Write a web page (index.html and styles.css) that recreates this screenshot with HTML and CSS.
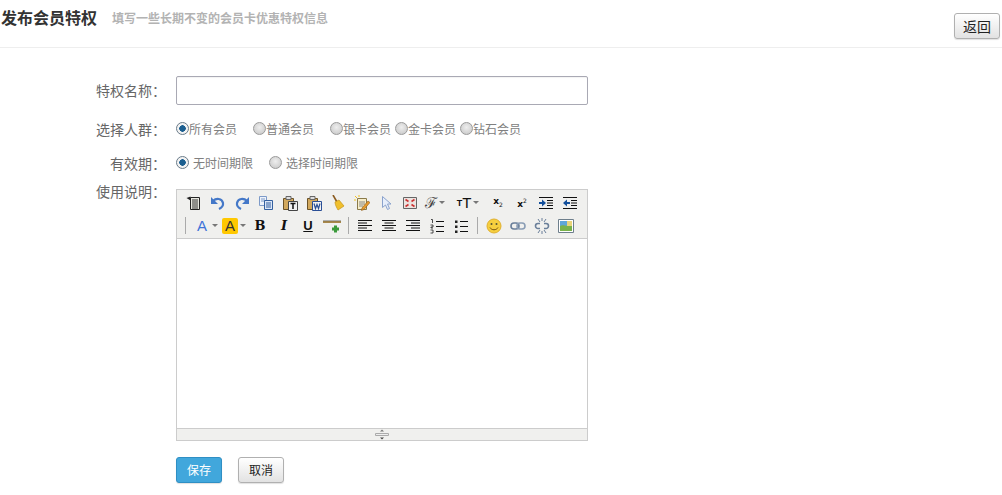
FILE: index.html
```html
<!DOCTYPE html>
<html lang="zh-CN">
<head>
    <meta charset="UTF-8">
    <title>发布会员特权</title>
    <link rel="stylesheet" href="styles.css">
</head>
<body>
    <div class="page-head">
        <h2>发布会员特权</h2>
        <span class="sub">填写一些长期不变的会员卡优惠特权信息</span>
        <button class="btn btn-back">返回</button>
    </div>

    <form class="form">
        <div class="row row-name">
            <label class="lab">特权名称<span class="colon">：</span></label>
            <input type="text" class="text-input">
        </div>
        <div class="row row-group">
            <label class="lab">选择人群<span class="colon">：</span></label>
            <div class="radios">
                <label class="opt w77"><input type="radio" name="g" checked>所有会员</label>
                <label class="opt w77"><input type="radio" name="g">普通会员</label>
                <label class="opt w65"><input type="radio" name="g">银卡会员</label>
                <label class="opt w65"><input type="radio" name="g">金卡会员</label>
                <label class="opt"><input type="radio" name="g">钻石会员</label>
            </div>
        </div>
        <div class="row row-time">
            <label class="lab">有效期<span class="colon">：</span></label>
            <div class="radios">
                <label class="opt opt-gap w93"><input type="radio" name="t" checked>无时间期限</label>
                <label class="opt opt-gap"><input type="radio" name="t">选择时间期限</label>
            </div>
        </div>
        <div class="row row-editor">
            <label class="lab">使用说明<span class="colon">：</span></label>
            <div class="editor">
                <div class="toolbar">
                    <div class="tool-row">
                        <span class="tool"><svg viewBox="0 0 16 16"><path d="M4.500 2.500h9v12h-9z" fill="#e8e8e0" stroke="#222"/><path d="M6 5h6M6 7h6M6 9h6M6 11h6M6 13h6" stroke="#333"/><path d="M.5 3l4-1.500v4z" fill="#222"/></svg></span>
                        <span class="tool"><svg viewBox="0 0 16 16"><path d="M3 6c3-3 9-3 10 2 .5 3-2 5-4 6" fill="none" stroke="#4478c8" stroke-width="2.200"/><path d="M1 2v7h7z" fill="#4478c8"/></svg></span>
                        <span class="tool"><svg viewBox="0 0 16 16"><path d="M13 6c-3-3-9-3-10 2-.5 3 2 5 4 6" fill="none" stroke="#4478c8" stroke-width="2.200"/><path d="M15 2v7H8z" fill="#4478c8"/></svg></span>
                        <span class="tool"><svg viewBox="0 0 16 16"><path d="M1.500 1.500h7v9h-7z" fill="#eef3fb" stroke="#7d9ac8"/><path d="M3 4h4M3 6h4" stroke="#7d9ac8"/><path d="M6.500 5.500h8v9h-8z" fill="#dbe6f7" stroke="#34609f"/><path d="M8 8h5M8 10h5M8 12h5" stroke="#34609f"/></svg></span>
                        <span class="tool"><svg viewBox="0 0 16 16"><path d="M1.500 3.500h10v11h-10z" fill="#d2a85c" stroke="#6b5226"/><path d="M4 1.500h5v3H4z" fill="#ddd" stroke="#666"/><path d="M6.500 6.500h9v9h-9z" fill="#f2f2f2" stroke="#444"/><path d="M8.500 8.500h5M11 8.500v5.500" stroke="#111" stroke-width="1.500"/></svg></span>
                        <span class="tool"><svg viewBox="0 0 16 16"><path d="M1.500 3.500h10v11h-10z" fill="#d2a85c" stroke="#6b5226"/><path d="M4 1.500h5v3H4z" fill="#ddd" stroke="#666"/><path d="M6.500 6.500h9v9h-9z" fill="#f2f2f2" stroke="#2a4f96"/><path d="M8 8.500l1.500 5 1.500-4 1.500 4 1.500-5" fill="none" stroke="#2a4f96" stroke-width="1.200"/></svg></span>
                        <span class="tool"><svg viewBox="0 0 16 16"><path d="M3 0l4 7" stroke="#8a5a1e" stroke-width="1.600"/><path d="M5 7l4-2 5 6-6 4c-1-2-3-5-3-8z" fill="#f0bf2c" stroke="#c4941a" stroke-width=".7"/></svg></span>
                        <span class="tool"><svg viewBox="0 0 16 16"><path d="M3.500 3.500h9v11h-9z" fill="#f6edc9" stroke="#8a7a4a"/><path d="M5 7h6M5 9h6M5 11h4" stroke="#888"/><path d="M1 1l2 2M5 0v2M0 5h2" stroke="#f0c020"/><path d="M8 13l6-7 2 1.500-6 7-2.500 1z" fill="#e79a2a" stroke="#8a5a1e" stroke-width=".6"/></svg></span>
                        <span class="tool"><svg viewBox="0 0 16 16"><path d="M4.500 1.500v11l3-2.500 2 4.500 2-1-2-4.500h3.500z" fill="#e6eefb" stroke="#8aa2cc"/></svg></span>
                        <span class="tool"><svg viewBox="0 0 16 16"><path d="M1.500 2.500h13v11h-13z" fill="#ece4e0" stroke="#666"/><path d="M3.500 4.500l3 2M12.500 4.500l-3 2M3.500 11.500l3-2M12.500 11.500l-3-2" stroke="#c33" stroke-width="1.600"/></svg></span>
                        <span class="tool tool-wide"><span class="g g-font">ℱ</span><i class="caret"></i></span>
                        <span class="tool tool-size"><span class="g g-small">T</span><span class="g g-big">T</span><i class="caret"></i></span>
                        <span class="tool"><span class="g g-script">x<sub>2</sub></span></span>
                        <span class="tool"><span class="g g-script">x<sup>2</sup></span></span>
                        <span class="tool"><svg viewBox="0 0 16 16"><path d="M1 2.500h14M9 5.500h6M9 8h6M9 10.500h6M1 13.500h14" stroke="#111"/><path d="M1 8h4" stroke="#14509c" stroke-width="2"/><path d="M4 4.500l4 3.500-4 3.500z" fill="#14509c"/></svg></span>
                        <span class="tool"><svg viewBox="0 0 16 16"><path d="M1 2.500h14M9 5.500h6M9 8h6M9 10.500h6M1 13.500h14" stroke="#111"/><path d="M4 8h4" stroke="#14509c" stroke-width="2"/><path d="M5 4.500L1 8l4 3.500z" fill="#14509c"/></svg></span>
                    </div>
                    <div class="tool-row">
                        <i class="sep sep-first"></i>
                        <span class="tool tool-color"><span class="g g-color">A</span><i class="caret"></i></span>
                        <span class="tool tool-color"><span class="g g-color g-bg">A</span><i class="caret"></i></span>
                        <span class="tool"><span class="g g-bold">B</span></span>
                        <span class="tool"><span class="g g-italic">I</span></span>
                        <span class="tool"><span class="g g-under">U</span></span>
                        <span class="tool"><svg class="svg-wide" viewBox="0 0 20 16"><path d="M1 3h18v2H1z" fill="#a8884a"/><path d="M1 2.800h18" stroke="#555" stroke-width=".6"/><path d="M10 11h7M13.500 7.500v7" stroke="#3a9a3a" stroke-width="3"/></svg></span>
                        <i class="sep"></i>
                        <span class="tool"><svg viewBox="0 0 16 16"><path d="M1 2.500h14M1 5h9M1 7.500h14M1 10h9M1 12.500h14" stroke="#111"/></svg></span>
                        <span class="tool"><svg viewBox="0 0 16 16"><path d="M1 2.500h14M3.500 5h9M1 7.500h14M3.500 10h9M1 12.500h14" stroke="#111"/></svg></span>
                        <span class="tool"><svg viewBox="0 0 16 16"><path d="M1 2.500h14M6 5h9M1 7.500h14M6 10h9M1 12.500h14" stroke="#111"/></svg></span>
                        <span class="tool"><svg viewBox="0 0 16 16"><path d="M7 3.500h8M7 8.500h8M7 13.500h8" stroke="#111"/><path d="M2 1.500h1.500v3.500M1.500 7h2.500v2H2v1h2M1.500 12H4v3H1.500" fill="none" stroke="#222" stroke-width=".8"/></svg></span>
                        <span class="tool"><svg viewBox="0 0 16 16"><path d="M7 3.500h8M7 8.500h8M7 13.500h8" stroke="#111"/><path d="M2 2.500h2.500v2.500H2zM2 7.500h2.500V10H2zM2 12.500h2.500V15H2z" fill="#222"/></svg></span>
                        <i class="sep"></i>
                        <span class="tool"><svg viewBox="0 0 16 16"><circle cx="8" cy="8" r="7" fill="#f6cf3e" stroke="#e0b030"/><circle cx="5.500" cy="6" r="1" fill="#553"/><circle cx="10.500" cy="6" r="1" fill="#553"/><path d="M4 9.500c1.500 3 6.500 3 8 0" fill="none" stroke="#7a5510"/></svg></span>
                        <span class="tool"><svg viewBox="0 0 16 16"><rect x="1" y="5" width="8" height="6" rx="3" fill="none" stroke="#6a7f9a" stroke-width="1.600"/><rect x="7" y="5" width="8" height="6" rx="3" fill="none" stroke="#8a9db5" stroke-width="1.600"/></svg></span>
                        <span class="tool"><svg viewBox="0 0 16 16"><path d="M6 5.500H4a2.500 2.500 0 000 5h2M10 5.500h2a2.500 2.500 0 010 5h-2" fill="none" stroke="#6a7f9a" stroke-width="1.600"/><path d="M4 1l2 3M8 0v3M12 1l-2 3M4 15l2-3M8 16v-3M12 15l-2-3" stroke="#6a7f9a"/></svg></span>
                        <span class="tool"><svg viewBox="0 0 16 16"><path d="M.5 1.500h15v13H.5z" fill="#fff" stroke="#6e7f8c"/><path d="M2 3h12v6H2z" fill="#5fa6d8"/><path d="M2 13V8c3-2 6 1 12-1v6z" fill="#79b24a"/><path d="M9 3h5v5H9z" fill="#e9d47a"/></svg></span>
                    </div>
                </div>
                <div class="edit-area"></div>
                <div class="resize-bar">
                    <svg viewBox="0 0 16 11" width="16" height="11"><path d="M8 .5l2 2H6z" fill="#777"/><path d="M1.500 4.500h13v2h-13z" fill="#eee" stroke="#aaa"/><path d="M6 8.500h4l-2 2z" fill="#444"/></svg>
                </div>
            </div>
        </div>
        <div class="actions">
            <button type="button" class="btn btn-primary">保存</button>
            <button type="button" class="btn btn-cancel">取消</button>
        </div>
    </form>
</body>
</html>
```

FILE: styles.css
```css
body { margin: 0; font-family: "Liberation Sans", "Noto Sans CJK SC", sans-serif; font-size: 12px; color: #666; background: #fff; height: 495px; overflow: hidden; }

.page-head { height: 47px; border-bottom: 1px solid #eee; display: flex; align-items: flex-start; }
.page-head h2 { margin: 7px 0 0 1px; font-size: 16px; line-height: 24px; color: #333; font-weight: bold; }
.sub { margin: 9px 0 0 15px; font-size: 12px; line-height: 20px; font-weight: bold; color: #b3b3b3; }

.btn { width: 46px; height: 26px; padding: 0 0 1px; border: 1px solid #b0b0b0; border-radius: 3px; background: linear-gradient(#fff, #e2e2e2); font-family: inherit; font-size: 14px; color: #222; box-shadow: 0 1px 1px rgba(0,0,0,.12); }
.btn-back { margin: 13px 2px 0 auto; }
.btn-primary { background: #41a7dc; border-color: #2f8fc4; color: #fff; font-size: 12px; }
.btn-cancel { font-size: 12px; }

.form { padding-top: 28px; }
.row { display: flex; }
.lab { width: 166px; padding-right: 10px; text-align: right; font-size: 14px; line-height: 18px; color: #666; flex: none; }
.colon { font-family: "Noto Sans CJK TC", sans-serif; }
.row-name { height: 29px; align-items: center; }
.row-group { height: 20px; align-items: center; margin-top: 14px; }
.row-time { height: 20px; align-items: center; margin-top: 14px; }
.row-editor { margin-top: 16px; }
.row-editor .lab { margin-top: -7px; }

.text-input { width: 412px; height: 29px; box-sizing: border-box; border: 1px solid #a9a9b4; border-radius: 2px; margin: 0; padding: 0 6px; box-shadow: inset 0 1px 1px rgba(0,0,0,.05); }

.radios { display: flex; align-items: center; position: relative; top: -1px; }
.opt { display: flex; align-items: center; color: #808080; font-size: 12px; }
.opt input { appearance: none; width: 13px; height: 13px; margin: 0; box-sizing: border-box; border-radius: 50%; border: 1px solid #9a9a9a; background: radial-gradient(circle at 50% 40%, #eee, #c4c4c4); flex: none; }
.opt input:checked { background: radial-gradient(circle, #1c5f90 0, #1c5f90 3px, #f3f3f3 3.500px); border-color: #6a7c8a; }
.opt-gap input { margin-right: 4px; }
.w77 { width: 77px; }
.w65 { width: 65px; }
.w93 { width: 93px; }

.editor { width: 412px; height: 252px; box-sizing: border-box; border: 1px solid #ccc; display: flex; flex-direction: column; }
.toolbar { height: 49px; background: #f0f0ee; border-bottom: 1px solid #ccc; padding: 1px 0 0 5px; flex: none; box-sizing: border-box; }
.tool-row { display: flex; align-items: center; height: 23px; }
.tool { width: 24px; height: 22px; display: flex; align-items: center; justify-content: center; flex: none; }
.tool svg { width: 16px; height: 16px; display: block; }
.tool svg.svg-wide { width: 20px; }
.tool-wide { width: 22px; margin-left: 2px; }
.tool-size { width: 32px; margin-right: 2px; margin-left: 6px; }
.sep { width: 1px; height: 17px; background: #aaa; flex: none; margin: 0 4px; }
.sep-first { margin: 0 6px 0 3px; }
.caret { width: 0; height: 0; border-left: 3px solid transparent; border-right: 3px solid transparent; border-top: 3px solid #777; margin-left: 2px; flex: none; }

.g { color: #111; line-height: 16px; }
.g-font { font-family: "DejaVu Serif", serif; font-size: 15px; color: #444; }
.g-small { font-size: 9px; font-weight: bold; }
.g-big { font-size: 15px; }
.g-script { font-family: "DejaVu Sans", sans-serif; font-weight: bold; font-size: 9px; }
.g-script sub, .g-script sup { font-size: 6px; font-weight: normal; }
.tool-color { width: 28px; }
.g-color { color: #3f74d8; font-size: 15px; width: 16px; text-align: center; }
.g-bg { background: #ffc800; color: #333; border-radius: 2px; }
.g-bold { font-family: "DejaVu Serif", serif; font-weight: bold; font-size: 13px; }
.g-italic { font-family: "DejaVu Serif", serif; font-weight: bold; font-style: italic; font-size: 13px; }
.g-under { font-family: "Liberation Sans", sans-serif; font-weight: bold; font-size: 13px; text-decoration: underline; }

.edit-area { flex: 1; background: #fff; }
.resize-bar { height: 12px; box-sizing: border-box; background: #f0f0ee; border-top: 1px solid #ccc; display: flex; justify-content: center; flex: none; }

.actions { display: flex; gap: 16px; margin: 16px 0 0 176px; }
```
